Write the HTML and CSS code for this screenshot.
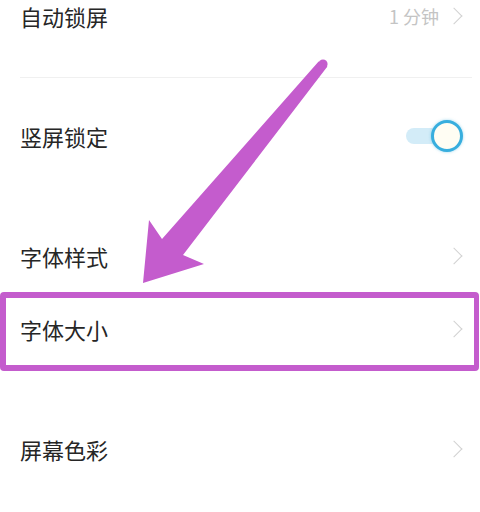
FILE: index.html
```html
<!DOCTYPE html>
<html lang="zh-CN">
<head>
<meta charset="utf-8">
<link rel="stylesheet" href="styles.css">
</head>
<body>
<div class="screen">
  <div class="list">
    <div class="row first">
      <span class="label">自动锁屏</span>
      <span class="right"><span class="value">1 分钟</span><span class="chev"></span></span>
    </div>
    <div class="gap"><div class="sep"></div></div>
    <div class="row">
      <span class="label">竖屏锁定</span>
      <span class="toggle"><span class="track"></span><span class="knob"></span></span>
    </div>
    <div class="gap"></div>
    <div class="row">
      <span class="label">字体样式</span>
      <span class="chev"></span>
    </div>
    <div class="row">
      <span class="label">字体大小</span>
      <span class="chev"></span>
    </div>
    <div class="gap"></div>
    <div class="row">
      <span class="label">屏幕色彩</span>
      <span class="chev"></span>
    </div>
    <div class="row short">
      <span class="label faint">智能感应亮屏</span>
      <span class="value faint">○○</span>
    </div>
  </div>
  <div class="highlight"></div>
  <svg class="arrow" width="480" height="512" viewBox="0 0 480 512">
    <circle cx="323" cy="64" r="4.6" fill="#c45ccd"/>
    <polygon fill="#c45ccd" points="318.6,61.6 327.4,66.6 183,255 204,264 143,283 149,220 162,239"/>
  </svg>
</div>
</body>
</html>
```
FILE: styles.css
```css
html, body {
  margin: 0;
  padding: 0;
  background: #ffffff;
}
.screen {
  position: relative;
  width: 480px;
  height: 512px;
  overflow: hidden;
  font-family: "Noto Sans CJK SC", "Noto Sans", sans-serif;
}
.list {
  display: flex;
  flex-direction: column;
  margin-top: -21px;
}
.row {
  height: 73px;
  flex: none;
  display: flex;
  align-items: center;
  justify-content: space-between;
  padding: 0 15px 0 20px;
}
.row.short {
  height: 40px;
  align-items: flex-end;
}
.label {
  font-size: 22px;
  color: #262626;
  line-height: 1;
}
.label.faint {
  color: #e4e4e4;
  margin-bottom: -10px;
}
.value {
  font-size: 18px;
  color: #c4c4c4;
  line-height: 1;
}
.value.faint {
  color: #e0e0e0;
  margin-right: 45px;
  margin-bottom: -10px;
}
.right {
  display: flex;
  align-items: center;
  gap: 9px;
}
.chev {
  width: 11px;
  height: 11px;
  border-top: 1.5px solid #d2d2d2;
  border-right: 1.5px solid #d2d2d2;
  transform: rotate(45deg);
  margin-right: 5px;
}
.gap {
  height: 47px;
  flex: none;
  display: flex;
  align-items: flex-start;
  padding: 25px 8px 0 20px;
  box-sizing: border-box;
}
.sep {
  flex: 1;
  height: 1px;
  background: #f0f0f0;
}
.toggle {
  position: relative;
  width: 57px;
  height: 32px;
  display: flex;
  align-items: center;
  margin-right: 2px;
}
.track {
  width: 40px;
  height: 16px;
  border-radius: 8px 0 0 8px;
  background: #d3ecf8;
}
.knob {
  position: absolute;
  right: 0;
  top: 0;
  width: 26px;
  height: 26px;
  border-radius: 50%;
  border: 3px solid #38aede;
  background: #fffdf3;
  box-shadow: 0 0 3px rgba(56, 174, 222, 0.5);
}
.highlight {
  position: absolute;
  left: 0;
  top: 292px;
  width: 468px;
  height: 67px;
  border: 6px solid #c45ccd;
  border-right-width: 5px;
  border-radius: 4px;
}
.arrow {
  position: absolute;
  left: 0;
  top: 0;
}
```
